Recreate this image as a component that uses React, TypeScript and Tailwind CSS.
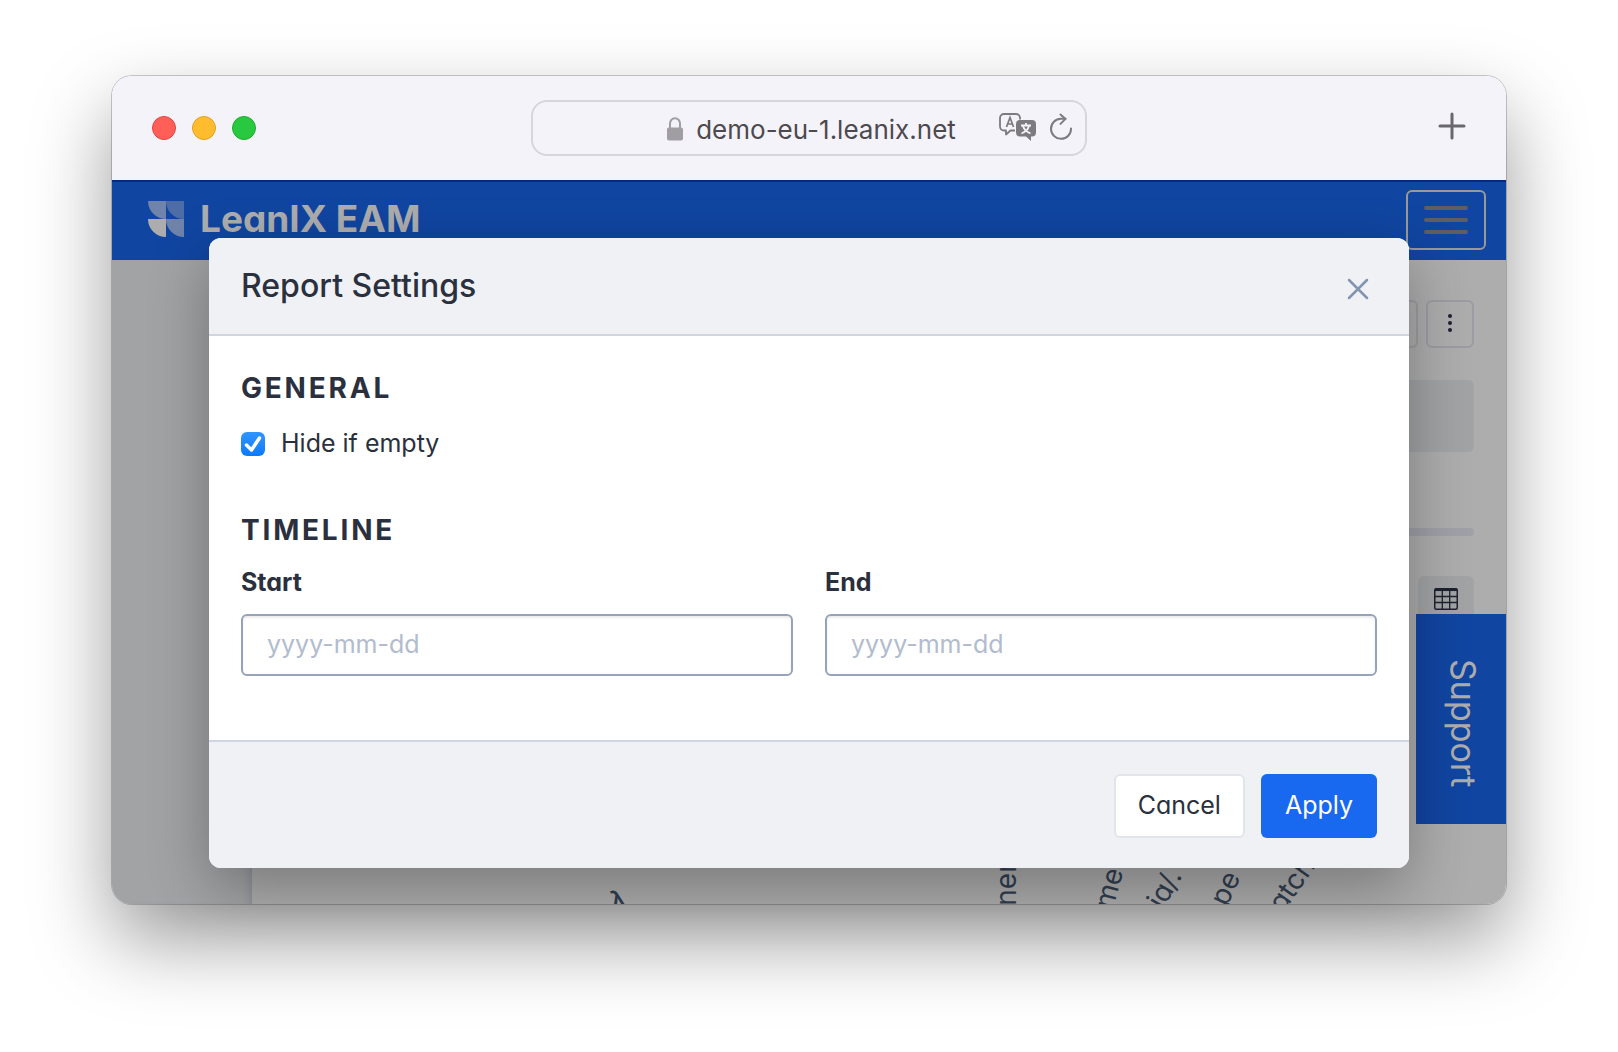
import React from "react";

const Logo: React.FC = () => (
  <svg width="36" height="36" viewBox="0 0 36 36" aria-hidden="true">
    <path d="M0 0h18v18A18 18 0 0 1 0 0z" fill="#6f83ab" />
    <path d="M18 0h18v18A18 18 0 0 1 18 0z" fill="#4e6ca6" />
    <path d="M0 18h18v18A18 18 0 0 1 0 18z" fill="#adadad" />
    <path d="M18 18h18v18A18 18 0 0 1 18 18z" fill="#6f83ab" />
  </svg>
);

const LockIcon: React.FC = () => (
  <svg width="18" height="24" viewBox="0 0 18 24" fill="none" aria-hidden="true">
    <path d="M4 12V6.500a5 5.300 0 0 1 10 0V12" stroke="#a19ea3" strokeWidth="2" />
    <rect x="1" y="10.500" width="16" height="13" rx="2" fill="#a19ea3" />
  </svg>
);

const TranslateIcon: React.FC = () => (
  <svg width="38" height="28" viewBox="0 0 38 28" fill="none" aria-hidden="true">
    <path
      d="M16 17.500h-4.500L7 21.500v-4H5a4 4 0 0 1-4-4V5a4 4 0 0 1 4-4h12a4 4 0 0 1 4 4v1.500"
      stroke="#7d7b80"
      strokeWidth="1.800"
      strokeLinejoin="round"
    />
    <path d="M7.500 14L11 4.500 14.500 14M8.700 11h4.600" stroke="#7d7b80" strokeWidth="1.700" />
    <path
      d="M21 7h12a4 4 0 0 1 4 4v8.500a4 4 0 0 1-4 4h-1V28l-5-4.500h-6a4 4 0 0 1-4-4V11a4 4 0 0 1 4-4z"
      fill="#7d7b80"
    />
    <path
      d="M22 12.500h10M27 10v2.500M24 13c1 3.500 4 6 7.500 7.500M30 13c-1 3.500-4 6-7.500 7.500"
      stroke="#f5f3fa"
      strokeWidth="1.800"
    />
  </svg>
);

const ReloadIcon: React.FC = () => (
  <svg
    width="24"
    height="28"
    viewBox="0 0 24 28"
    fill="none"
    stroke="#7d7b80"
    strokeWidth="2"
    strokeLinecap="round"
    strokeLinejoin="round"
    aria-hidden="true"
  >
    <path d="M22 15.500A10 10 0 1 1 12 5.800h4.500" />
    <path d="M11.500 1.500l5 4.400-5 5" />
  </svg>
);

const GridIcon: React.FC = () => (
  <svg width="24" height="22" viewBox="0 0 24 22" fill="none" stroke="#1c2230" aria-hidden="true">
    <rect x="0.750" y="0.750" width="22.500" height="20.500" rx="1.500" strokeWidth="1.500" />
    <path d="M1 1.800h22" strokeWidth="2.500" />
    <path d="M1 8.500h22M1 14.500h22M8.300 2v19M15.700 2v19" strokeWidth="1.300" />
  </svg>
);

type AxisLabelProps = { text: string; className: string };

const AxisLabel: React.FC<AxisLabelProps> = ({ text, className }) => (
  <span className={`absolute text-[28px] leading-8 text-[#323e50] whitespace-nowrap ${className}`}>
    {text}
  </span>
);

type DateFieldProps = { id: string; label: string };

const DateField: React.FC<DateFieldProps> = ({ id, label }) => (
  <div className="flex flex-1 flex-col">
    <label htmlFor={id} className="text-[25px] leading-8 font-bold">
      {label}
    </label>
    <input
      id={id}
      type="text"
      placeholder="yyyy-mm-dd"
      className="mt-4 h-[62px] w-full rounded-md border-2 border-[#97a3ba] bg-white px-6 pb-0.5 text-[25px] shadow-[inset_0_2px_2px_rgba(0,0,0,0.08)] placeholder:text-[#b2bccd]"
    />
  </div>
);

const BrowserBar: React.FC = () => (
  <div className="grid h-[104px] grid-cols-[1fr_556px_1fr] items-center bg-[#f5f3fa] px-10">
    <div className="flex gap-4">
      <div className="size-6 rounded-full border border-[#e2463f] bg-[#ff5f57]" />
      <div className="size-6 rounded-full border border-[#dfa023] bg-[#febc2e]" />
      <div className="size-6 rounded-full border border-[#1dad2b] bg-[#28c840]" />
    </div>
    <div className="relative flex h-14 items-center justify-center gap-3 rounded-2xl border-2 border-[#d8d5dc] pt-0.5 pl-1 text-[26px] text-[#4c4a4e] [font-feature-settings:normal]">
      <LockIcon />
      <span>demo-eu-1.leanix.net</span>
      <div className="absolute right-3 flex items-center gap-3 pb-1">
        <TranslateIcon />
        <ReloadIcon />
      </div>
    </div>
    <button aria-label="New tab" className="justify-self-end pb-1">
      <svg width="28" height="28" viewBox="0 0 28 28" stroke="#69666c" strokeWidth="3" strokeLinecap="round">
        <path d="M14 2v24M2 14h24" />
      </svg>
    </button>
  </div>
);

const AppHeader: React.FC = () => (
  <div className="flex h-20 items-center justify-between bg-[#1045a1] pr-5 pl-9 shadow-[inset_0_2px_0_#08277f]">
    <div className="flex items-center gap-4 pb-0.5">
      <Logo />
      <span className="text-[37px] leading-10 font-bold text-[#adadad]">LeanIX EAM</span>
    </div>
    <button
      aria-label="Menu"
      className="flex h-[60px] w-20 flex-col items-center justify-center gap-2 rounded-md border-2 border-[#999]"
    >
      <span className="h-1 w-11 rounded-full bg-[#5f5f63]" />
      <span className="h-1 w-11 rounded-full bg-[#5f5f63]" />
      <span className="h-1 w-11 rounded-full bg-[#5f5f63]" />
    </button>
  </div>
);

const ReportPage: React.FC = () => (
  <div className="relative flex h-[644px] bg-[#adadad]">
    <div className="w-[140px] bg-[#a2a3a5] shadow-[inset_-8px_0_8px_-6px_rgba(60,70,100,0.2)]" />
    <div className="flex flex-1 flex-col px-8 pt-10">
      <div className="flex justify-end gap-2">
        <div className="size-12 rounded-md border-2 border-[#9c9ca2]" />
        <button
          aria-label="More"
          className="flex size-12 flex-col items-center justify-center gap-[3px] rounded-md border-2 border-[#9c9ca2] pb-0.5"
        >
          <span className="size-1 rounded-full bg-[#1c2230]" />
          <span className="size-1 rounded-full bg-[#1c2230]" />
          <span className="size-1 rounded-full bg-[#1c2230]" />
        </button>
      </div>
      <div className="mt-8 h-[72px] rounded-md bg-[#a2a3a5]" />
      <div className="mt-[76px] h-2 rounded-full bg-[#9fa0a8]" />
      <div className="mt-10 flex h-[46px] w-14 items-center justify-center self-end rounded-md bg-[#a2a3a5]">
        <GridIcon />
      </div>
    </div>
    {/* slanted column labels, mostly hidden behind the dialog */}
    <AxisLabel text="λ" className="-bottom-3 left-[498px] -rotate-12 font-medium" />
    <AxisLabel text="ner" className="bottom-1 left-[872px] -rotate-90" />
    <AxisLabel text="me" className="bottom-0 left-[976px] -rotate-75" />
    <AxisLabel text="ia/." className="bottom-0 left-[1032px] -rotate-60" />
    <AxisLabel text="pe" className="bottom-0 left-[1096px] -rotate-65" />
    <AxisLabel text="atch" className="bottom-1 left-[1150px] -rotate-55" />
    <button className="absolute top-[354px] right-0 flex h-[210px] w-[90px] items-center justify-center bg-[#1045a1] pt-2 pl-1 text-[34px] text-[#adadad] [writing-mode:vertical-rl]">
      Support
    </button>
  </div>
);

const SettingsDialog: React.FC = () => (
  <div
    role="dialog"
    aria-labelledby="dialog-title"
    className="absolute inset-x-[97px] top-[162px] overflow-hidden rounded-xl bg-white text-[#2a303d] shadow-[0_20px_60px_rgba(0,0,0,0.3)]"
  >
    <div className="flex h-[98px] items-center justify-between border-b-2 border-[#cfd6df] bg-[#f0f1f5] px-8">
      <h2 id="dialog-title" className="text-[32px] leading-10 font-medium">
        Report Settings
      </h2>
      <button aria-label="Close" className="mt-1.5 p-2">
        <svg width="22" height="22" viewBox="0 0 22 22" stroke="#8394b0" strokeWidth="2.500" strokeLinecap="round">
          <path d="M2 2l18 18M20 2L2 20" />
        </svg>
      </button>
    </div>
    <div className="px-8 pt-8 pb-16">
      <h3 className="text-[28px] leading-10 font-bold tracking-widest">GENERAL</h3>
      <label className="mt-4 flex h-10 items-center gap-4 text-[25px]">
        <span className="grid size-6">
          <input
            type="checkbox"
            defaultChecked
            className="col-start-1 row-start-1 size-6 appearance-none rounded-md bg-linear-to-b from-[#2f95ff] to-[#0a7aff]"
          />
          <svg
            className="pointer-events-none col-start-1 row-start-1"
            width="24"
            height="24"
            viewBox="0 0 24 24"
            fill="none"
            stroke="#fff"
            strokeWidth="3.500"
            strokeLinecap="round"
            strokeLinejoin="round"
          >
            <path d="M5.500 13l5 5L18.500 6" />
          </svg>
        </span>
        Hide if empty
      </label>
      <h3 className="mt-[46px] text-[28px] leading-10 font-bold tracking-widest">TIMELINE</h3>
      <div className="mt-4 flex gap-8">
        <DateField id="start" label="Start" />
        <DateField id="end" label="End" />
      </div>
    </div>
    <div className="flex h-32 items-center justify-end gap-4 border-t-2 border-[#cfd6df] bg-[#f0f1f5] px-8 pt-0.5">
      <button className="h-16 rounded-md border-2 border-[#e2e4ec] bg-white px-[22px] text-[25px]">Cancel</button>
      <button className="h-16 rounded-md bg-[#1868f0] px-6 text-[25px] text-white">Apply</button>
    </div>
  </div>
);

const App: React.FC = () => {
  return (
    <div className="min-h-screen overflow-hidden bg-white px-28 pt-[76px] pb-[148px] font-['Inter',sans-serif] [font-feature-settings:'cv11']">
      <div className="relative rounded-[20px] shadow-[0_0_0_1px_rgba(0,0,0,0.2),0_36px_80px_rgba(0,0,0,0.4)]">
        <div className="overflow-hidden rounded-[20px]">
          <BrowserBar />
          <AppHeader />
          <ReportPage />
        </div>
        <SettingsDialog />
      </div>
    </div>
  );
};

export default App;
